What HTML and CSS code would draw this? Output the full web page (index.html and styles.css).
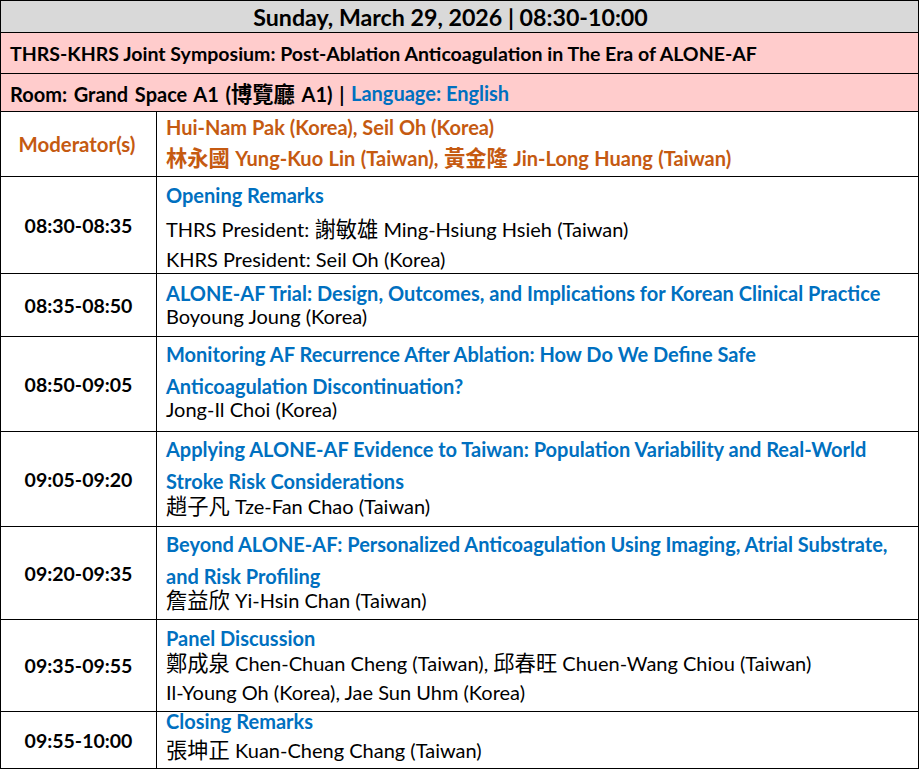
FILE: index.html
```html
<!DOCTYPE html>
<html lang="en">
<head>
<meta charset="utf-8">
<title>THRS-KHRS Joint Symposium</title>
<link rel="stylesheet" href="styles.css">
</head>
<body>
<div class="schedule">
  <div class="cell head">Sunday, March 29, 2026 | 08:30-10:00</div>
  <div class="cell banner title">THRS-KHRS Joint Symposium: Post-Ablation Anticoagulation in The Era of ALONE-AF</div>
  <div class="cell banner"><span class="room">Room: Grand Space A1 (<span class="han">博覽廳</span> A1) | </span><span class="blue">Language: English</span></div>

  <div class="cell time orange mod">Moderator(s)</div>
  <div class="cell body p-mod">
    <div class="line orange b">Hui-Nam Pak (Korea), Seil Oh (Korea)</div>
    <div class="line orange b g7 wide"><span class="han">林永國</span> Yung-Kuo Lin (Taiwan), <span class="han">黃金隆</span> Jin-Long Huang (Taiwan)</div>
  </div>

  <div class="cell time">08:30-08:35</div>
  <div class="cell body p6">
    <div class="line blue b">Opening Remarks</div>
    <div class="line g10">THRS President: <span class="han">謝敏雄</span> Ming-Hsiung Hsieh (Taiwan)</div>
    <div class="line g6">KHRS President: Seil Oh (Korea)</div>
  </div>

  <div class="cell time">08:35-08:50</div>
  <div class="cell body p7">
    <div class="line blue b">ALONE-AF Trial: Design, Outcomes, and Implications for Korean Clinical Practice</div>
    <div class="line gn1">Boyoung Joung (Korea)</div>
  </div>

  <div class="cell time">08:50-09:05</div>
  <div class="cell body p5">
    <div class="line blue b">Monitoring AF Recurrence After Ablation: How Do We Define Safe</div>
    <div class="line blue b g8">Anticoagulation Discontinuation?</div>
    <div class="line gn1">Jong-Il Choi (Korea)</div>
  </div>

  <div class="cell time">09:05-09:20</div>
  <div class="cell body p5">
    <div class="line blue b">Applying ALONE-AF Evidence to Taiwan: Population Variability and Real-World</div>
    <div class="line blue b g8">Stroke Risk Considerations</div>
    <div class="line g1"><span class="han">趙子凡</span> Tze-Fan Chao (Taiwan)</div>
  </div>

  <div class="cell time">09:20-09:35</div>
  <div class="cell body p5">
    <div class="line blue b">Beyond ALONE-AF: Personalized Anticoagulation Using Imaging, Atrial Substrate,</div>
    <div class="line blue b g8">and Risk Profiling</div>
    <div class="line"><span class="han">詹益欣</span> Yi-Hsin Chan (Taiwan)</div>
  </div>

  <div class="cell time">09:35-09:55</div>
  <div class="cell body p6">
    <div class="line blue b">Panel Discussion</div>
    <div class="line g1"><span class="han">鄭成泉</span> Chen-Chuan Cheng (Taiwan), <span class="han">邱春旺</span> Chuen-Wang Chiou (Taiwan)</div>
    <div class="line g5">Il-Young Oh (Korea), Jae Sun Uhm (Korea)</div>
  </div>

  <div class="cell time">09:55-10:00</div>
  <div class="cell body p-end">
    <div class="line blue b">Closing Remarks</div>
    <div class="line g5"><span class="han">張坤正</span> Kuan-Cheng Chang (Taiwan)</div>
  </div>
</div>
</body>
</html>
```

FILE: styles.css
```css
html, body {
  margin: 0;
  padding: 0;
  background: #ffffff;
}

body {
  font-family: Lato, "Noto Sans CJK TC", sans-serif;
  font-size: 20px;
  color: #000000;
}

.schedule {
  width: 919px;
  box-sizing: border-box;
  display: grid;
  grid-template-columns: 156px 762px;
  grid-template-rows: 32px 41px 38px 65px 97px 63px 95px 95px 93px 92px 57px;
  border-left: 1px solid #000;
  border-top: 1px solid #000;
}

.cell {
  box-sizing: border-box;
  border-right: 1px solid #000;
  border-bottom: 1px solid #000;
  min-width: 0;
}

.head {
  grid-column: 1 / span 2;
  background: #d9d9d9;
  font-weight: 700;
  font-size: 23.2px;
  display: flex;
  align-items: center;
  justify-content: center;
  padding-top: 1px;
  padding-right: 18px;
}

.banner {
  grid-column: 1 / span 2;
  background: #ffcccc;
  font-weight: 700;
  display: flex;
  align-items: center;
  padding-left: 9px;
  white-space: pre;
}

.banner.title {
  font-size: 19.55px;
}

.room {
  word-spacing: 1.8px;
}

.time {
  display: flex;
  align-items: center;
  justify-content: center;
  font-weight: 700;
  font-size: 19.5px;
}

.time.mod {
  font-size: 20.4px;
  padding-right: 3px;
}

.body {
  padding-left: 9px;
}

.line {
  line-height: 24px;
  white-space: nowrap;
}

.line.wide {
  word-spacing: 0.6px;
}

.han {
  font-size: 21.3px;
}

.b { font-weight: 700; }
.blue { color: #0070c0; }
.orange { color: #c55a11; }

.p-mod { padding-top: 3px; }
.p5 { padding-top: 5px; }
.p6 { padding-top: 6px; }
.p7 { padding-top: 7px; }
.p-end { padding-top: 0; }
.p-end .line:first-child { margin-top: -3px; }

.gn1 { margin-top: -1px; }
.g1 { margin-top: 1px; }
.g5 { margin-top: 5px; }
.g6 { margin-top: 6px; }
.g7 { margin-top: 7px; }
.g8 { margin-top: 8px; }
.g10 { margin-top: 10px; }
```
